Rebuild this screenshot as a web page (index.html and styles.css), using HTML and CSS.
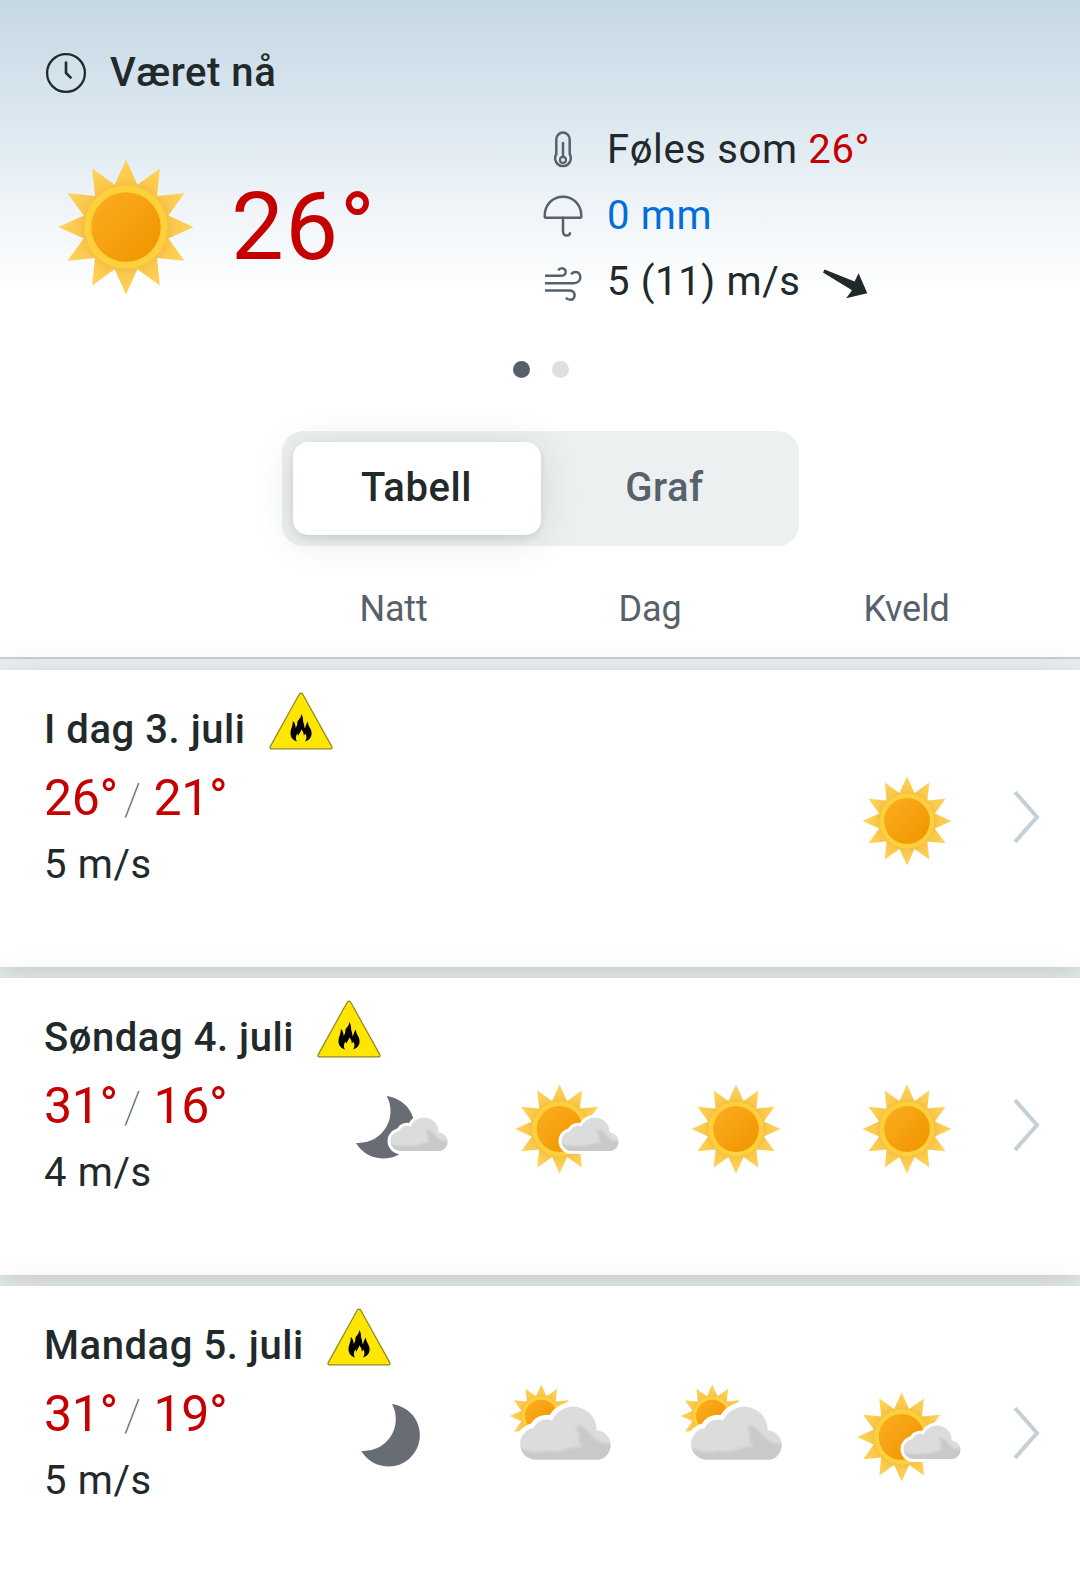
FILE: index.html
```html
<!DOCTYPE html>
<html lang="no">
    <head>
        <meta charset="UTF-8" />
        <meta name="viewport" content="width=device-width, initial-scale=1" />
        <title>Været nå</title>
        <link rel="stylesheet" href="styles.css">
    </head>

    <body>
        <!-- Weather symbols -->
        <svg class="defs" width="0" height="0">
            <defs>
                <linearGradient id="sun-core" x1="0" y1="0" x2="1" y2="1">
                    <stop offset="0.1" stop-color="#fbab1e" />
                    <stop offset="0.9" stop-color="#f19600" />
                </linearGradient>
                <radialGradient id="sun-rays" gradientUnits="userSpaceOnUse" cx="0" cy="0" r="44.5">
                    <stop offset="0.6" stop-color="#f3bf45" />
                    <stop offset="0.72" stop-color="#fbc94d" />
                    <stop offset="1" stop-color="#ffd45a" />
                </radialGradient>
                <filter id="soft" x="-20%" y="-20%" width="140%" height="140%">
                    <feGaussianBlur stdDeviation="1" />
                </filter>
                <clipPath id="cloud-clip">
                    <path d="M60 76A10 10 0 0 1 59.2 56.1C61 51.8 66 49.4 70.6 51.4A14.6 14.6 0 0 1 98.6 57.4A9.4 9.4 0 0 1 99.9 76Z" />
                </clipPath>
                <g id="sun-shape">
                    <path fill="url(#sun-rays)" d="M0-44.5L7.5-27.9L22.3-38.5L20.4-20.4L38.5-22.3L27.9-7.5L44.5 0L27.9 7.5L38.5 22.3L20.4 20.4L22.3 38.5L7.5 27.9L0 44.5L-7.5 27.9L-22.3 38.5L-20.4 20.4L-38.5 22.3L-27.9 7.5L-44.5 0L-27.9-7.5L-38.5-22.3L-20.4-20.4L-22.3-38.5L-7.5-27.9Z" />
                    <circle r="27.4" fill="#fdd03c" />
                    <circle r="22.9" fill="url(#sun-core)" />
                </g>
                <g id="cloud-shape">
                    <path fill="#dcdcdc" d="M60 76A10 10 0 0 1 59.2 56.1C61 51.8 66 49.4 70.6 51.4A14.6 14.6 0 0 1 98.6 57.4A9.4 9.4 0 0 1 99.9 76Z" />
                    <g clip-path="url(#cloud-clip)">
                        <path fill="#c9c9c9" filter="url(#soft)" d="M48 67C54 71 60 72 66 70.8C71 70.5 75 71.5 79 69.5C83 67.5 88 68.5 90.5 66.5C84 65 90 62 87 58.5C85 56 86 54.5 88 54.5C91 55 94 59 97 62C101 66 104 67 110 65L112 82L46 82Z" />
                    </g>
                </g>
                <g id="moon-shape">
                    <path fill="#686d75" d="M52.7 21A31.4 31.4 0 1 1 22 68A32 32 0 0 0 52.7 21Z" />
                </g>
                <path id="cloud-gap" fill="#fff" stroke="#fff" stroke-width="6" stroke-linejoin="round" d="M60 76A10 10 0 0 1 59.2 56.1C61 51.8 66 49.4 70.6 51.4A14.6 14.6 0 0 1 98.6 57.4A9.4 9.4 0 0 1 99.9 76Z" />
            </defs>
            <symbol id="clear" viewBox="0 0 108 108">
                <use href="#sun-shape" transform="translate(54 54)" />
            </symbol>
            <symbol id="fair" viewBox="0 0 108 108" overflow="visible">
                <use href="#sun-shape" transform="translate(48.6 54)" />
                <use href="#cloud-gap" />
                <use href="#cloud-shape" />
            </symbol>
            <symbol id="partly" viewBox="0 0 108 108" overflow="visible">
                <use href="#sun-shape" transform="translate(30.3 33) scale(0.71)" />
                <g transform="translate(-71.2 -44.1) scale(1.59)">
                    <use href="#cloud-gap" />
                    <use href="#cloud-shape" />
                </g>
            </symbol>
            <symbol id="night" viewBox="0 0 108 108">
                <use href="#moon-shape" transform="translate(-0.7 0)" />
            </symbol>
            <symbol id="fair-night" viewBox="0 0 108 108" overflow="visible">
                <use href="#moon-shape" transform="translate(-6 0)" />
                <use href="#cloud-gap" />
                <use href="#cloud-shape" />
            </symbol>
            <symbol id="fire" viewBox="0 0 64 58">
                <path fill="#ffe600" stroke="#8f8520" stroke-width="1.2" stroke-linejoin="round" d="M30.4 2Q32 0.2 33.6 2L62.8 54.6Q63.6 56.6 61.6 56.8H2.4Q0.4 56.6 1.2 54.6Z" />
                <path fill="#000" d="M28 49.4C23 48 20.6 44 21.8 38.5C22.4 35.5 23.9 33.6 23.8 29C25.8 30.6 26.6 33 26.6 36C28 34 28.4 32.5 28.4 30.5C28.6 27.5 32.4 26.5 32.2 22C34.6 25 33.6 28.5 34.6 31C35.2 33 35.4 34.5 35.6 36.5C37 35 36.6 32 39 29.5C38.6 33.5 41.8 36 42.4 39.5C43.2 44.5 41 48 36 49.4C38.2 46.5 37.8 43.8 36.2 41.4C35.8 42.6 35.4 43 34.8 43.4C34.8 40.8 34 39 32.2 37.4C32 40 30 41 29.6 43.4C28.8 42.8 28.6 42 28.4 41.4C26.6 44 26.2 46.8 28 49.4Z" />
            </symbol>
        </svg>

        <header class="now">
            <h1 class="now-title">
                <svg class="clock" width="42" height="42" viewBox="0 0 42 42" fill="none" stroke="#21292b">
                    <circle cx="21" cy="21" r="18.9" stroke-width="2.3" />
                    <path stroke-width="2.6" d="M21 9.5V21L26.4 26.4" />
                </svg>
                Været nå
            </h1>
            <div class="now-content">
                <div class="now-temp">
                    <svg class="now-symbol" viewBox="0 0 108 108"><use href="#clear" /></svg>
                    <span class="now-degrees">26°</span>
                </div>
                <ul class="now-details">
                    <li>
                        <svg class="detail-icon" viewBox="0 0 42 42">
                            <path d="M14.3 10.3A6.7 6.7 0 0 1 27.7 10.3V25A7.9 7.9 0 1 1 14.3 25Z" />
                            <path d="M21 14V28" />
                            <circle cx="21" cy="30.9" r="3" stroke-width="2.1" />
                        </svg>
                        <span>Føles som <span class="hot">26°</span></span>
                    </li>
                    <li>
                        <svg class="detail-icon" viewBox="0 0 42 42">
                            <path d="M2.7 21.8C2.3 9.5 11 1.8 21 1.8S39.7 9.5 39.3 21.8Q39.2 22.8 38.2 22.8H3.8Q2.8 22.8 2.7 21.8Z" />
                            <path d="M21 22.8V36.5Q21.3 40.6 25 40.6Q27.4 40.5 28 38.4" />
                        </svg>
                        <span class="rain">0 mm</span>
                    </li>
                    <li>
                        <svg class="detail-icon wind-icon" viewBox="0 0 42 42">
                            <path d="M3 14.8H18.5C25.5 14.8 24.8 7.2 20 7.2Q17.4 7.2 16.2 9.3" />
                            <path d="M3 22.2H31.5C40.5 22.2 40 11 33.6 11Q30.6 11 29.2 13.4" />
                            <path d="M3 29.5H27C34.5 29.5 34 38.8 28.4 38.8Q25.4 38.8 23.9 36.6" />
                        </svg>
                        <span>5 (11) m/s</span>
                        <svg class="wind-arrow" width="46" height="32" viewBox="0 0 46 32">
                            <path fill="#21292b" d="M2.6 1.6L32.6 13.6L36.6 5.3L45.3 25.2L24.2 30.2L30 22.2L1 4.6Z" />
                        </svg>
                    </li>
                </ul>
            </div>
            <div class="dots">
                <span class="dot active"></span>
                <span class="dot"></span>
            </div>
        </header>

        <div class="tabs">
            <button class="tab selected">Tabell</button>
            <button class="tab">Graf</button>
        </div>

        <div class="periods">
            <span class="natt">Natt</span>
            <span class="dag">Dag</span>
            <span class="kveld">Kveld</span>
        </div>

        <main class="days">
            <section class="day">
                <div class="day-info">
                    <h2>I dag 3. juli <svg class="warning"><use href="#fire" /></svg></h2>
                    <p class="temps">26°<span class="slash">/</span>21°</p>
                    <p class="wind">5 m/s</p>
                </div>
                <div class="symbol"></div>
                <div class="symbol"></div>
                <div class="symbol"></div>
                <div class="symbol"><svg><use href="#clear" /></svg></div>
                <svg class="chevron" viewBox="0 0 30 60"><path d="M4 5.2L26 30L4 54.8" /></svg>
            </section>

            <section class="day">
                <div class="day-info">
                    <h2>Søndag 4. juli <svg class="warning"><use href="#fire" /></svg></h2>
                    <p class="temps">31°<span class="slash">/</span>16°</p>
                    <p class="wind">4 m/s</p>
                </div>
                <div class="symbol"><svg><use href="#fair-night" /></svg></div>
                <div class="symbol"><svg><use href="#fair" /></svg></div>
                <div class="symbol"><svg><use href="#clear" /></svg></div>
                <div class="symbol"><svg><use href="#clear" /></svg></div>
                <svg class="chevron" viewBox="0 0 30 60"><path d="M4 5.2L26 30L4 54.8" /></svg>
            </section>

            <section class="day">
                <div class="day-info">
                    <h2>Mandag 5. juli <svg class="warning"><use href="#fire" /></svg></h2>
                    <p class="temps">31°<span class="slash">/</span>19°</p>
                    <p class="wind">5 m/s</p>
                </div>
                <div class="symbol"><svg><use href="#night" /></svg></div>
                <div class="symbol"><svg><use href="#partly" /></svg></div>
                <div class="symbol"><svg><use href="#partly" /></svg></div>
                <div class="symbol"><svg><use href="#fair" /></svg></div>
                <svg class="chevron" viewBox="0 0 30 60"><path d="M4 5.2L26 30L4 54.8" /></svg>
            </section>
        </main>
    </body>
</html>
```

FILE: styles.css
```css
* {
    margin: 0;
    padding: 0;
    box-sizing: border-box;
}

body {
    width: 1080px;
    height: 1579px;
    overflow: hidden;
    background: #fff;
    color: #21292b;
    font-family: Roboto, "Liberation Sans", sans-serif;
    font-size: 40px;
    letter-spacing: 0.65px;
}

h1,
h2,
.tab {
    font-size: 40px;
    font-weight: 500;
    letter-spacing: 0.55px;
}

.defs {
    position: absolute;
}

/* current weather */
.now {
    height: 431px;
    padding: 48px 45px 0;
    background: linear-gradient(#c6d8e5 0, #dae7ef 115px, #eff4f8 205px, #fff 295px);
}

.now-title {
    display: flex;
    align-items: center;
    gap: 23px;
    height: 48px;
}

.clock {
    margin-top: 2px;
}

.now-content {
    display: flex;
    height: 198px;
    margin-top: 20px;
}

.now-temp {
    display: flex;
    align-items: center;
    width: 497px;
    padding-top: 24px;
}

.now-symbol {
    width: 164px;
    height: 164px;
    margin-left: -1px;
}

.now-degrees {
    margin-left: 23px;
    color: #c60000;
    font-size: 94px;
    line-height: 100px;
    letter-spacing: 1.5px;
}

.now-details {
    list-style: none;
}

.now-details li {
    display: flex;
    align-items: center;
    gap: 23px;
    height: 66px;
}

.detail-icon {
    width: 42px;
    height: 42px;
    margin-top: 2px;
    fill: none;
    stroke: #56616c;
    stroke-width: 2.5;
    stroke-linecap: round;
    stroke-linejoin: round;
}

.wind-icon {
    stroke-linecap: butt;
}

.wind-arrow {
    margin: 5px 0 0 -2px;
}

.hot {
    color: #c60000;
}

.rain {
    color: #006edb;
}

.dots {
    display: flex;
    justify-content: center;
    gap: 22px;
    margin-top: 47px;
    padding-left: 2px;
}

.dot {
    width: 17px;
    height: 17px;
    border-radius: 50%;
    background: #dedfe4;
}

.dot.active {
    background: #56616c;
}

/* table / graph switch */
.tabs {
    display: flex;
    width: 517px;
    height: 115px;
    margin: 0 auto;
    padding: 11px 10px 11px 11px;
    border-radius: 21px;
    background: #ecf0f1;
}

.tab {
    flex: 1;
    padding-bottom: 2px;
    border: none;
    border-radius: 15px;
    background: none;
    color: #56616c;
    font-family: inherit;
}

.tab.selected {
    background: #fff;
    color: #21292b;
    box-shadow: 0 3px 6px rgba(33, 41, 43, 0.1), 0 4px 40px rgba(33, 41, 43, 0.12);
}

.periods {
    display: grid;
    grid-template-columns: 308px 171px 342px 171px;
    height: 113px;
    padding-top: 42px;
    border-bottom: 2px solid #c3d0d8;
    color: #56616c;
    font-size: 36px;
    line-height: 42px;
    letter-spacing: -0.2px;
    text-align: center;
}

.natt {
    grid-column: 2;
}

/* days */
.days {
    padding-top: 11px;
    background: #e9eeef;
}

.day {
    display: grid;
    grid-template-columns: 308px repeat(4, 171px) 1fr;
    align-items: start;
    height: 297px;
    margin-bottom: 11px;
    background: #fff;
    box-shadow: 0 4px 8px rgba(33, 41, 43, 0.06), 0 4px 36px rgba(33, 41, 43, 0.1);
}

.day-info {
    padding: 26px 0 0 44px;
    white-space: nowrap;
}

.day-info h2 {
    display: flex;
    align-items: center;
    gap: 23px;
    height: 66px;
}

.warning {
    flex-shrink: 0;
    width: 64px;
    height: 58px;
    margin-bottom: 17px;
}

.temps {
    color: #c60000;
    font-size: 50px;
    line-height: 72px;
    letter-spacing: -0.4px;
}

.slash {
    margin: 0 13px 0 6px;
    color: #56616c;
    font-size: 45px;
    font-weight: 100;
}

.wind {
    line-height: 58px;
}

.symbol {
    display: flex;
    justify-content: center;
    padding-top: 97px;
}

.symbol svg {
    width: 108px;
    height: 108px;
    overflow: visible;
}

.chevron {
    width: 30px;
    height: 60px;
    margin: 117px 0 0 19px;
    fill: none;
    stroke: #c3d0d8;
    stroke-width: 4;
}
```
